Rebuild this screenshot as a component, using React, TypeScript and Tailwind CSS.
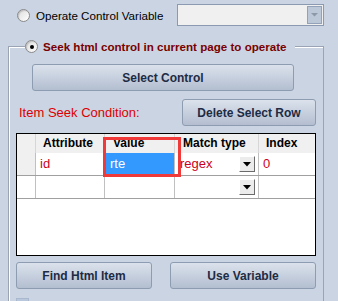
import React from 'react'

const font = { fontFamily: '"Liberation Sans", Arial, sans-serif' }

function Radio({ checked }: { checked?: boolean }) {
  return (
    <span className="flex h-[13px] w-[13px] shrink-0 items-center justify-center rounded-full border border-[#8a8a8a] bg-linear-to-br from-[#dcdcdc] to-white shadow-[inset_1px_1px_1px_rgba(0,0,0,0.15)]">
      {checked && <span className="h-[4px] w-[4px] rounded-full bg-black" />}
    </span>
  )
}

function Button({ label, className }: { label: string; className?: string }) {
  return (
    <button
      className={
        'flex h-[27px] items-center justify-center rounded-[3px] border border-[#8e9cb2] bg-linear-to-b from-[#dbe2ec] to-[#b3bed0] text-[12px] font-bold text-[#1d2b44] ' +
        (className ?? '')
      }
    >
      {label}
    </button>
  )
}

function MiniDrop() {
  return (
    <span className="flex h-[16px] w-[16px] items-center justify-center border border-t-white border-l-white border-r-[#6b6b6b] border-b-[#6b6b6b] bg-[#ececec]">
      <svg width="8" height="5" viewBox="0 0 8 5">
        <path d="M0 0h8L4 4.5z" fill="#000" />
      </svg>
    </span>
  )
}

const cols = 'grid grid-cols-[19px_69px_70px_84px_55px]'

export default function App() {
  return (
    <div className="h-[301px] w-[338px] overflow-hidden bg-[#cad4e2]" style={font}>
      <div className="mt-[4px] flex h-[22px] items-center">
        <div className="ml-[17px] flex items-center gap-[6px] pt-[2px]">
          <Radio />
          <span className="text-[11.6px] text-black">Operate Control Variable</span>
        </div>
        <div className="ml-auto mr-[14px] flex h-[22px] w-[147px] items-center justify-end border border-[#8b9ab0] bg-[#f0f0f0] pr-[1px]">
          <span className="flex h-[18px] w-[15px] items-center justify-center border border-[#93a2b8] bg-[#bcc7d8]">
            <svg width="7" height="4" viewBox="0 0 7 4">
              <path d="M0 0h7L3.5 3.5z" fill="#8d98a8" />
            </svg>
          </span>
        </div>
      </div>

      <fieldset className="ml-[8px] mt-[12px] h-[300px] w-[315px] border border-[#9aa4b4] px-[7px] shadow-[inset_1px_1px_0_#fff]">
        <legend className="ml-[9px] flex items-center gap-[5px] bg-[#cad4e2] pr-[8px]">
          <Radio checked />
          <span className="text-[11.6px] font-bold text-[#7a0000]">
            Seek html control in current page to operate
          </span>
        </legend>

        <Button label="Select Control" className="ml-[16px] mt-[9px] w-[262px]" />

        <div className="mt-[8px] flex items-center">
          <span className="ml-[3px] text-[13px] text-[#dd0000]">Item Seek Condition:</span>
          <Button label="Delete Select Row" className="ml-auto w-[134px]" />
        </div>

        <div className="relative mt-[7px] h-[123px] w-[300px] border border-black bg-white">
          <div className={cols + ' h-[19px] bg-[#f0f0f0] text-[12px] font-bold leading-[19px] text-black'}>
            <span className="border-r border-[#d6d6d6]" />
            <span className="border-r border-[#d6d6d6] pl-[7px]">Attribute</span>
            <span className="border-r border-[#d6d6d6] pl-[8px]">Value</span>
            <span className="border-r border-[#d6d6d6] pl-[8px]">Match type</span>
            <span className="pl-[7px]">Index</span>
          </div>
          <div className={cols + ' h-[23px] border-b border-[#a0a0a0] text-[13px] leading-[22px] text-[#cc0022]'}>
            <span className="border-r border-[#c0c0c0] bg-[#f0f0f0]" />
            <span className="border-r border-[#c0c0c0] pl-[4px]">id</span>
            <span className="border-r border-[#c0c0c0] bg-[#3399ff] pl-[5px] text-white">rte</span>
            <span className="flex items-center justify-between border-r border-[#c0c0c0] pl-[5px] pr-[3px]">
              regex
              <MiniDrop />
            </span>
            <span className="pl-[4px]">0</span>
          </div>
          <div className={cols + ' h-[23px] border-b border-[#a0a0a0]'}>
            <span className="border-r border-[#c0c0c0]" />
            <span className="border-r border-[#c0c0c0]" />
            <span className="border-r border-[#c0c0c0]" />
            <span className="flex items-center justify-end border-r border-[#c0c0c0] pr-[3px]">
              <MiniDrop />
            </span>
            <span />
          </div>
          <div className="absolute left-[86px] top-[3px] h-[40px] w-[78px] border-[3px] border-[#f03a3a]" />
        </div>

        <div className="mt-[6px] flex w-[300px] items-center justify-between">
          <Button label="Find Html Item" className="w-[136px]" />
          <Button label="Use Variable" className="w-[146px]" />
        </div>

        <div className="mt-[9px] h-[13px] w-[13px] border border-[#a9b8ce] bg-[#b9c7dc]" />
      </fieldset>
    </div>
  )
}
